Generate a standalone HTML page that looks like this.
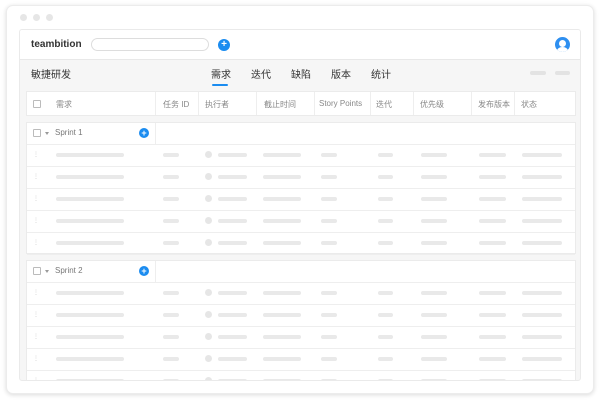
<!DOCTYPE html><html><head><meta charset="utf-8"><style>
*{margin:0;padding:0;box-sizing:border-box}
body{width:600px;height:402px;background:#fff;font-family:"Liberation Sans","Noto Sans CJK SC",sans-serif;position:relative;overflow:hidden}
.outer{position:absolute;left:6px;top:5px;width:588px;height:389px;border-radius:7px;background:#fff;box-shadow:0 1px 5px rgba(0,0,0,.15);border:1px solid #ececec}
.dot{position:absolute;top:14px;width:7px;height:7px;border-radius:50%;background:#e6e6e6}
.win{position:absolute;left:19px;top:29px;width:562px;height:352px;background:#f6f6f6;border:1px solid #eaeaea;border-radius:3px;overflow:hidden}
.hdr{position:absolute;left:0;top:0;width:100%;height:30px;background:#fff;border-bottom:1px solid #e8e8e8}
.abs{position:absolute}
.bar{position:absolute;height:4px;border-radius:2px;background:#e9e9e9}
.tbl{position:absolute;left:6px;width:550px;background:#fff;border:1px solid #ebebeb}
.th{font-size:8px;color:#888;position:absolute;top:7px}
.vl{position:absolute;top:0;bottom:0;width:1px;background:#eee}
.row{position:absolute;left:0;width:100%;height:22px;border-top:1px solid #eee}
.cb{position:absolute;width:8px;height:8px;border:1px solid #bbb;border-radius:1px;background:#fff}
.plus{position:absolute;width:10px;height:10px;border-radius:50%;background:#1b8cf0;color:#fff;font-size:9px;line-height:10px;text-align:center;font-weight:bold}
</style></head><body>
<div class="outer"></div>
<div class="dot" style="left:20px"></div><div class="dot" style="left:33px"></div><div class="dot" style="left:46px"></div>
<div class="win">
<div class="hdr">
<div class="abs" style="left:11px;top:9px;font-size:10px;font-weight:bold;color:#333">teambition</div>
<div class="abs" style="left:71px;top:8px;width:118px;height:13px;border:1px solid #ddd;border-radius:7px"></div>
<div class="plus" style="left:198px;top:9px;width:12px;height:12px;line-height:12px;font-size:10px">+</div>
<div class="abs" style="left:535px;top:7px;width:15px;height:15px;border-radius:50%;background:#2e8ff0;overflow:hidden"><div class="abs" style="left:4px;top:3px;width:7px;height:7px;border-radius:50%;background:#fff"></div><div class="abs" style="left:2px;top:10px;width:11px;height:8px;border-radius:50%;background:#fff"></div></div>
</div>
<div class="abs" style="left:11px;top:36px;font-size:10px;color:#333">敏捷研发</div>
<div class="abs" style="left:191px;top:36px;font-size:10px;color:#333">需求</div>
<div class="abs" style="left:192px;top:54px;width:16px;height:2px;background:#1b8cf0;border-radius:1px"></div>
<div class="abs" style="left:231px;top:36px;font-size:10px;color:#333">迭代</div>
<div class="abs" style="left:271px;top:36px;font-size:10px;color:#333">缺陷</div>
<div class="abs" style="left:311px;top:36px;font-size:10px;color:#333">版本</div>
<div class="abs" style="left:351px;top:36px;font-size:10px;color:#333">统计</div>
<div class="bar" style="left:510px;top:41px;width:16px;background:#e3e3e3"></div>
<div class="bar" style="left:535px;top:41px;width:15px;background:#e3e3e3"></div>
<div class="tbl" style="top:61px;height:25px">
<div class="cb" style="left:6px;top:8px"></div>
<div class="th" style="left:29px">需求</div>
<div class="vl" style="left:128px"></div><div class="th" style="left:136px">任务 ID</div>
<div class="vl" style="left:171px"></div><div class="th" style="left:178px">执行者</div>
<div class="vl" style="left:229px"></div><div class="th" style="left:237px">截止时间</div>
<div class="vl" style="left:287px"></div><div class="th" style="left:292px">Story Points</div>
<div class="vl" style="left:343px"></div><div class="th" style="left:349px">迭代</div>
<div class="vl" style="left:386px"></div><div class="th" style="left:393px">优先级</div>
<div class="vl" style="left:444px"></div><div class="th" style="left:451px">发布版本</div>
<div class="vl" style="left:487px"></div><div class="th" style="left:494px">状态</div>
</div>
<div id="s1" class="tbl" style="top:92px;height:132px"></div>
<div id="s2" class="tbl" style="top:230px;height:140px"></div>
</div>
<script>
function fill(id,name){var t=document.getElementById(id);var h='<div class="cb" style="left:6px;top:6px"></div><div class="abs" style="left:18px;top:9px;border-left:2.5px solid transparent;border-right:2.5px solid transparent;border-top:3px solid #999"></div><div class="abs" style="left:28px;top:5px;font-size:8px;color:#777">'+name+'</div><div class="plus" style="left:112px;top:5px">+</div><div class="vl" style="left:128px;height:21px;bottom:auto"></div>';
for(var i=0;i<6;i++){var y=21+i*22;h+='<div class="row" style="top:'+y+'px"><div class="abs" style="left:6px;top:6px;font-size:6px;color:#ccc">⋮</div><div class="bar" style="left:29px;top:8px;width:68px"></div><div class="bar" style="left:136px;top:8px;width:16px"></div><div class="abs" style="left:178px;top:6px;width:7px;height:7px;border-radius:50%;background:#e6e6e6"></div><div class="bar" style="left:191px;top:8px;width:29px"></div><div class="bar" style="left:236px;top:8px;width:38px"></div><div class="bar" style="left:294px;top:8px;width:16px"></div><div class="bar" style="left:351px;top:8px;width:15px"></div><div class="bar" style="left:394px;top:8px;width:26px"></div><div class="bar" style="left:452px;top:8px;width:27px"></div><div class="bar" style="left:495px;top:8px;width:40px"></div></div>';}
t.innerHTML=h;}
fill('s1','Sprint 1');fill('s2','Sprint 2');
</script>
</body></html>
